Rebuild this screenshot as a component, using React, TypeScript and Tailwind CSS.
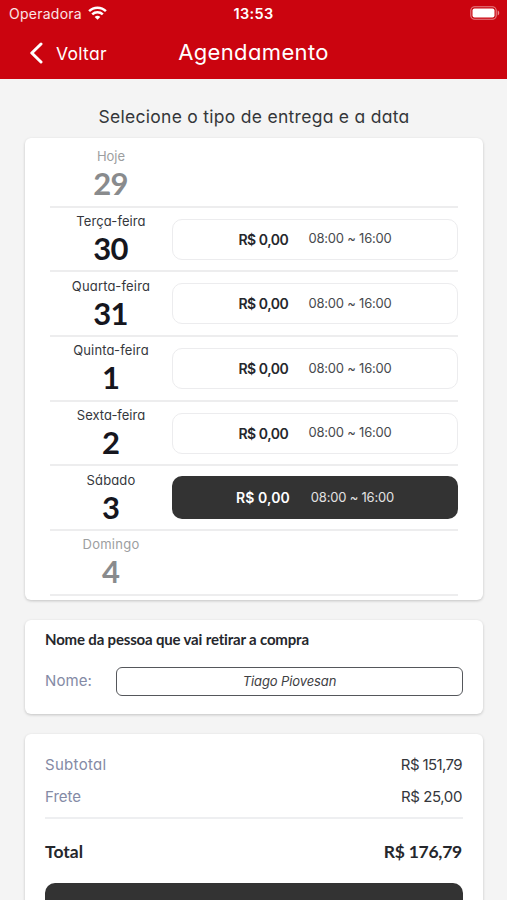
type Day = { label: string; number: number; slot?: boolean; selected?: boolean; tracking: string };

const days: Day[] = [
  { label: 'Hoje', number: 29, tracking: 'tracking-[0px]' },
  { label: 'Terça-feira', number: 30, slot: true, tracking: 'tracking-[0.1px]' },
  { label: 'Quarta-feira', number: 31, slot: true, tracking: 'tracking-[0.2px]' },
  { label: 'Quinta-feira', number: 1, slot: true, tracking: 'tracking-[0.15px]' },
  { label: 'Sexta-feira', number: 2, slot: true, tracking: 'tracking-[0px]' },
  { label: 'Sábado', number: 3, slot: true, selected: true, tracking: 'tracking-[0.15px]' },
  { label: 'Domingo', number: 4, tracking: 'tracking-[0.25px]' },
];

function StatusBar() {
  return (
    <div className="grid h-7 grid-cols-3 items-center pr-[7px] pl-[9px] leading-none [font-feature-settings:normal]">
      <div className="flex items-center gap-[6px]">
        <span className="text-[14px] tracking-[0.25px] text-white/90">Operadora</span>
        <svg className="-mt-[2px]" width="19" height="14" viewBox="0 0 19 14" fill="none" stroke="white" strokeWidth="2.5">
          <path d="M1.1 5.2C5.7 .6 13.3 .6 17.9 5.2" />
          <path d="M4.2 8.3C7.1 5.5 11.9 5.5 14.8 8.3" />
          <path d="M9.5 13.7L6.7 10.9C8.2 9.5 10.8 9.5 12.3 10.9Z" fill="white" stroke="none" />
        </svg>
      </div>
      <span className="pr-[2px] text-center text-[14.5px] font-semibold tracking-[0.3px]">13:53</span>
      <svg className="-mt-[2px] justify-self-end" width="30" height="14" viewBox="0 0 30 14">
        <rect x=".8" y=".8" width="25.4" height="12.4" rx="3.8" fill="none" stroke="white" strokeOpacity=".5" strokeWidth="1.1" />
        <rect x="2.5" y="2.5" width="22" height="9" rx="2" fill="white" />
        <path d="M27.7 4.6C29.7 5.2 29.7 8.8 27.7 9.4Z" fill="white" fillOpacity=".55" />
      </svg>
    </div>
  );
}

function DayRow({ day }: { day: Day }) {
  return (
    <div className="flex h-[64.7px] items-center border-b-2 border-[#ededee]">
      <div className={`flex w-[122px] shrink-0 flex-col items-center pt-px ${day.slot ? 'text-[#15161e]' : 'text-[#898b8d]'}`}>
        <span className={`h-[18px] text-[13px] leading-[18px] ${day.tracking} ${day.slot ? 'text-[#35373c]' : 'text-[#9c9ea0]'}`}>{day.label}</span>
        <span className="h-[37px] pr-[1px] font-['Lato',sans-serif] text-[31px] leading-[36px] font-bold tracking-[-0.8px]">{day.number}</span>
      </div>
      {day.slot && (
        <button
          className={`flex flex-1 items-center justify-center rounded-[10px] ${
            day.selected ? 'h-[43px] gap-[21px] bg-[#333333] text-white' : 'h-[41px] gap-[20px] border-[1.5px] border-[#ececee] bg-white text-[#25272c]'
          }`}
        >
          <span className={day.selected ? 'text-[14px] font-semibold tracking-[0.1px]' : 'text-[14px] font-semibold tracking-[-0.45px]'}>R$ 0,00</span>
          <span className={`text-[13px] tracking-[-0.2px] ${day.selected ? 'text-[#e2e2e2]' : 'text-[#47494d]'}`}>08:00 ~ 16:00</span>
        </button>
      )}
    </div>
  );
}

export default function App() {
  return (
    <div className="h-[900px] w-[507px] overflow-hidden bg-[#f4f4f4] font-['Inter',sans-serif] text-[#25272c] [font-feature-settings:'cv11']">
      <header className="h-[79px] bg-[#cb040f] text-white">
        <StatusBar />
        <div className="grid h-[49px] grid-cols-3 items-center">
          <div className="flex items-center gap-3 pl-[29px]">
            <svg width="15" height="22" viewBox="0 0 15 22" fill="none" stroke="white" strokeWidth="3" strokeLinecap="round" strokeLinejoin="round">
              <path d="M12 2L2.8 11L12 20" />
            </svg>
            <span className="pt-[4px] text-[17.5px] tracking-[0.3px]">Voltar</span>
          </div>
          <h1 className="text-center text-[22px] tracking-[0.35px]">Agendamento</h1>
        </div>
      </header>
      <main className="pr-6 pl-[25px]">
        <h2 className="flex h-[59px] items-center justify-center pt-[17px] text-[17.5px] tracking-[0.28px] whitespace-nowrap text-[#34373a]">Selecione o tipo de entrega e a data</h2>
        <section className="h-[462px] rounded-[6px] bg-white px-[25px] pt-[5px] shadow-[0_1px_3px_rgba(0,0,0,0.2)]">
          {days.map((day) => (
            <DayRow key={day.number} day={day} />
          ))}
        </section>
        <section className="mt-5 h-[94px] rounded-[6px] bg-white px-5 pt-[9px] shadow-[0_1px_3px_rgba(0,0,0,0.2)]">
          <h3 className="font-['Lato',sans-serif] text-[15px] leading-[20px] font-bold tracking-[-0.17px]">Nome da pessoa que vai retirar a compra</h3>
          <label className="mt-[18px] flex items-center">
            <span className="w-[71px] text-[15px] tracking-[0.1px] text-[#848aa5]">Nome:</span>
            <span className="flex h-[29px] flex-1 items-center justify-center rounded-[6px] border-[1.5px] border-[#55575b] text-[13px] tracking-[-0.1px] text-[#3e4043] italic">Tiago Piovesan</span>
          </label>
        </section>
        <section className="mt-5 h-[220px] rounded-[6px] bg-white px-5 pt-[15px] shadow-[0_1px_3px_rgba(0,0,0,0.2)]">
          <div className="flex h-8 items-center justify-between text-[15px]">
            <span className="tracking-[0.3px] text-[#848aa5]">Subtotal</span>
            <span className="pr-px tracking-[-0.6px] text-[#34363b]">R$ 151,79</span>
          </div>
          <div className="flex h-8 items-center justify-between text-[15px]">
            <span className="text-[#848aa5]">Frete</span>
            <span className="pr-px tracking-[-0.4px] text-[#34363b]">R$ 25,00</span>
          </div>
          <div className="mt-[4px] flex h-[66px] items-center justify-between border-t-2 border-[#eeeff1] pt-[2px] font-['Lato',sans-serif] text-[17.5px] font-bold">
            <span>Total</span>
            <span className="pr-px tracking-[-0.25px]">R$ 176,79</span>
          </div>
          <button className="block h-12 w-full rounded-[10px] bg-[#333333]" aria-label="Continuar" />
        </section>
      </main>
    </div>
  );
}
